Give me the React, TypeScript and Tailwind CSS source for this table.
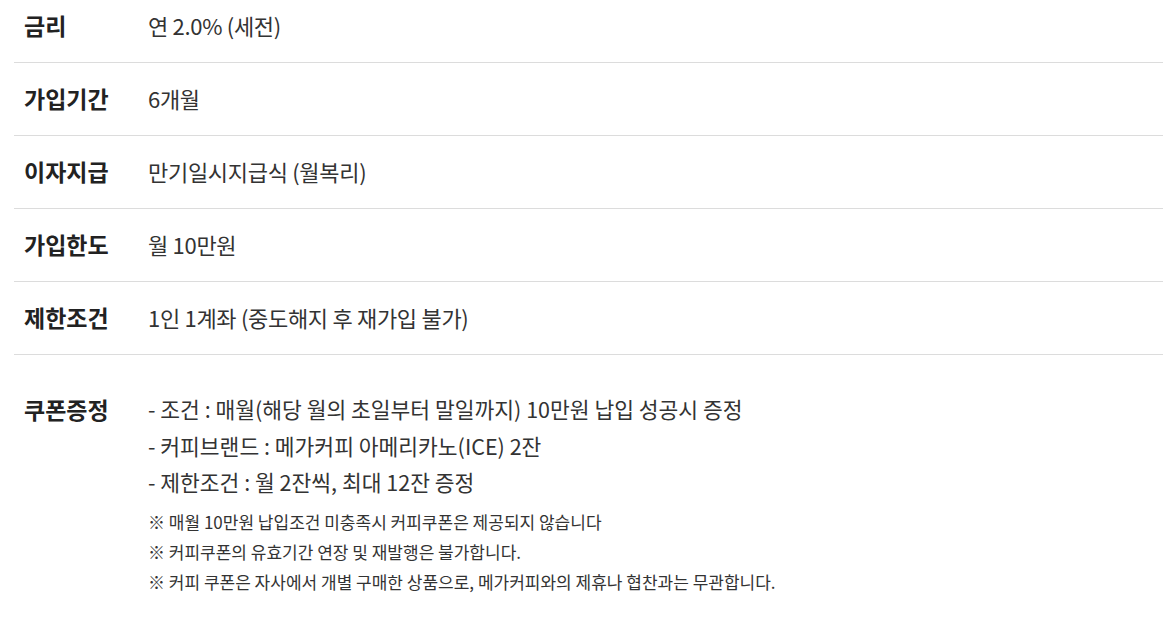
import React from "react";

const FONT = { fontFamily: '"Noto Sans CJK KR", "Noto Sans", sans-serif' };

const ROWS = [
  { label: "금리", value: "연 2.0% (세전)" },
  { label: "가입기간", value: "6개월" },
  { label: "이자지급", value: "만기일시지급식 (월복리)" },
  { label: "가입한도", value: "월 10만원" },
  { label: "제한조건", value: "1인 1계좌 (중도해지 후 재가입 불가)" },
];

const COUPON_LINES = [
  "- 조건 : 매월(해당 월의 초일부터 말일까지) 10만원 납입 성공시 증정",
  "- 커피브랜드 : 메가커피 아메리카노(ICE) 2잔",
  "- 제한조건 : 월 2잔씩, 최대 12잔 증정",
];

const NOTES = [
  "※ 매월 10만원 납입조건 미충족시 커피쿠폰은 제공되지 않습니다",
  "※ 커피쿠폰의 유효기간 연장 및 재발행은 불가합니다.",
  "※ 커피 쿠폰은 자사에서 개별 구매한 상품으로, 메가커피와의 제휴나 협찬과는 무관합니다.",
];

export default function App() {
  return (
    <div className="w-[1163px] h-[623px] bg-white overflow-hidden pl-[14px]" style={FONT}>
      {ROWS.map((row, i) => (
        <div
          key={row.label}
          className={`flex items-center pl-[10px] border-b border-[#dcdcdc] ${i === 0 ? "pt-[10px] pb-[22px]" : "pt-[20px] pb-[22px]"}`}
        >
          <div className="w-[124px] shrink-0 text-[23px] leading-[30px] font-bold text-[#222]">{row.label}</div>
          <div className="text-[22px] leading-[30px] text-[#333] tracking-[-0.3px]">{row.value}</div>
        </div>
      ))}
      <div className="flex pl-[10px] pt-[36px]">
        <div className="w-[124px] shrink-0 text-[23px] leading-[36.5px] font-bold text-[#222]">쿠폰증정</div>
        <div className="flex flex-col">
          {COUPON_LINES.map((line) => (
            <div key={line} className="text-[21.5px] leading-[36.5px] text-[#333] whitespace-nowrap">{line}</div>
          ))}
          <div className="mt-[6px] flex flex-col">
            {NOTES.map((note) => (
              <div key={note} className="text-[17px] leading-[30px] text-[#333] whitespace-nowrap">{note}</div>
            ))}
          </div>
        </div>
      </div>
    </div>
  );
}
